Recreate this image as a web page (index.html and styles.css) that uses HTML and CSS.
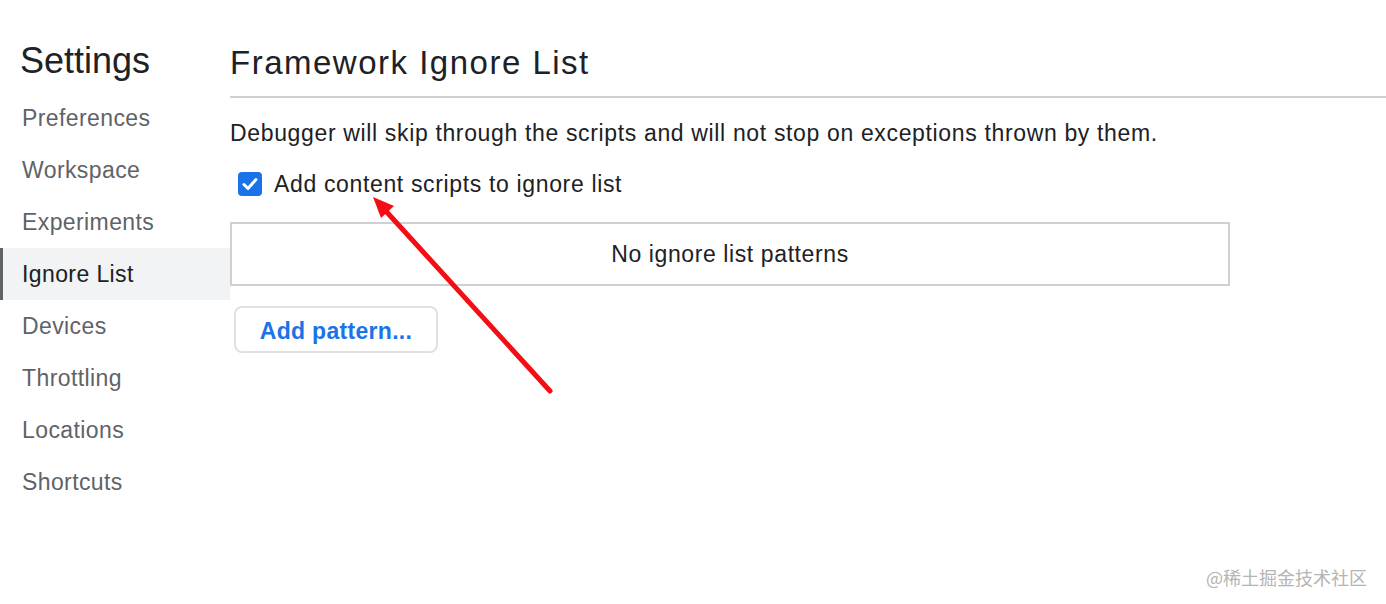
FILE: index.html
```html
<!DOCTYPE html>
<html lang="en">
<head>
<meta charset="utf-8">
<title>Settings</title>
<link rel="stylesheet" href="styles.css">
</head>
<body>
<div class="page">
  <nav class="sidebar">
    <h1 class="sidebar-title">Settings</h1>
    <ul class="nav-list">
      <li class="nav-item">Preferences</li>
      <li class="nav-item">Workspace</li>
      <li class="nav-item">Experiments</li>
      <li class="nav-item selected">Ignore List</li>
      <li class="nav-item">Devices</li>
      <li class="nav-item">Throttling</li>
      <li class="nav-item">Locations</li>
      <li class="nav-item">Shortcuts</li>
    </ul>
  </nav>
  <main class="content">
    <h2 class="content-title">Framework Ignore List</h2>
    <p class="description">Debugger will skip through the scripts and will not stop on exceptions thrown by them.</p>
    <label class="check-row">
      <span class="checkbox">
        <svg viewBox="0 0 24 24" width="24" height="24"><path d="M6 12.5l4 4 8-9" fill="none" stroke="#fff" stroke-width="3" stroke-linecap="round" stroke-linejoin="round"/></svg>
      </span>
      <span class="check-label">Add content scripts to ignore list</span>
    </label>
    <div class="pattern-box">No ignore list patterns</div>
    <button class="add-btn" type="button">Add pattern...</button>
  </main>
</div>
<svg class="annotation" width="1386" height="604" viewBox="0 0 1386 604">
  <line x1="550" y1="391" x2="384" y2="209" stroke="#f40d14" stroke-width="5" stroke-linecap="round"/>
  <polygon points="373,197 394,206 381,218" fill="#f40d14"/>
</svg>
<div class="watermark">@稀土掘金技术社区</div>
</body>
</html>
```
FILE: styles.css
```css
html, body {
  margin: 0;
  padding: 0;
  background: #fff;
}
body {
  font-family: "Liberation Sans", Arial, sans-serif;
  color: #202124;
  width: 1386px;
  height: 604px;
  overflow: hidden;
  position: relative;
}
.page {
  display: flex;
  height: 604px;
}
.sidebar {
  width: 230px;
  flex: none;
}
.sidebar-title {
  margin: 0;
  padding: 43px 0 13px 20px;
  font-size: 36px;
  line-height: 36px;
  font-weight: normal;
  color: #202124;
}
.nav-list {
  list-style: none;
  margin: 0;
  padding: 0;
}
.nav-item {
  height: 52px;
  line-height: 52px;
  font-size: 23px;
  letter-spacing: 0.4px;
  padding-left: 22px;
  color: #5f6368;
  box-sizing: border-box;
}
.nav-item.selected {
  background: #f1f3f4;
  color: #202124;
  border-left: 3px solid #5f6368;
  padding-left: 19px;
}
.content {
  flex: 1;
  display: flex;
  flex-direction: column;
  align-items: flex-start;
}
.content-title {
  align-self: stretch;
  margin: 0;
  padding: 46px 0 17px 0;
  font-size: 33px;
  line-height: 33px;
  letter-spacing: 1.5px;
  font-weight: normal;
  border-bottom: 2px solid #cfd0d2;
}
.description {
  margin: 22px 0 0 0;
  font-size: 23px;
  line-height: 26px;
  letter-spacing: 0.65px;
}
.check-row {
  display: flex;
  align-items: center;
  margin: 26px 0 0 8px;
  height: 24px;
}
.checkbox {
  width: 24px;
  height: 24px;
  border-radius: 4px;
  background: #1a73e8;
  display: flex;
}
.check-label {
  margin-left: 12px;
  font-size: 23px;
  line-height: 24px;
  letter-spacing: 0.65px;
}
.pattern-box {
  margin-top: 26px;
  width: 1000px;
  height: 64px;
  box-sizing: border-box;
  border: 2px solid #cfd0d2;
  display: flex;
  align-items: center;
  justify-content: center;
  font-size: 23px;
  letter-spacing: 0.6px;
}
.add-btn {
  margin: 20px 0 0 4px;
  width: 204px;
  height: 47px;
  box-sizing: border-box;
  border: 2px solid #dfe1e4;
  border-radius: 8px;
  background: #fff;
  font-family: "Liberation Sans", Arial, sans-serif;
  font-size: 23px;
  letter-spacing: 0.3px;
  font-weight: bold;
  color: #1a73e8;
  padding: 4px 0 0 0;
}
.annotation {
  position: absolute;
  left: 0;
  top: 0;
  pointer-events: none;
}
.watermark {
  position: absolute;
  left: 1206px;
  top: 565px;
  font-family: "Noto Sans CJK SC", "Liberation Sans", sans-serif;
  font-size: 18px;
  line-height: 24px;
  color: #b4b4b4;
  white-space: nowrap;
}
```
